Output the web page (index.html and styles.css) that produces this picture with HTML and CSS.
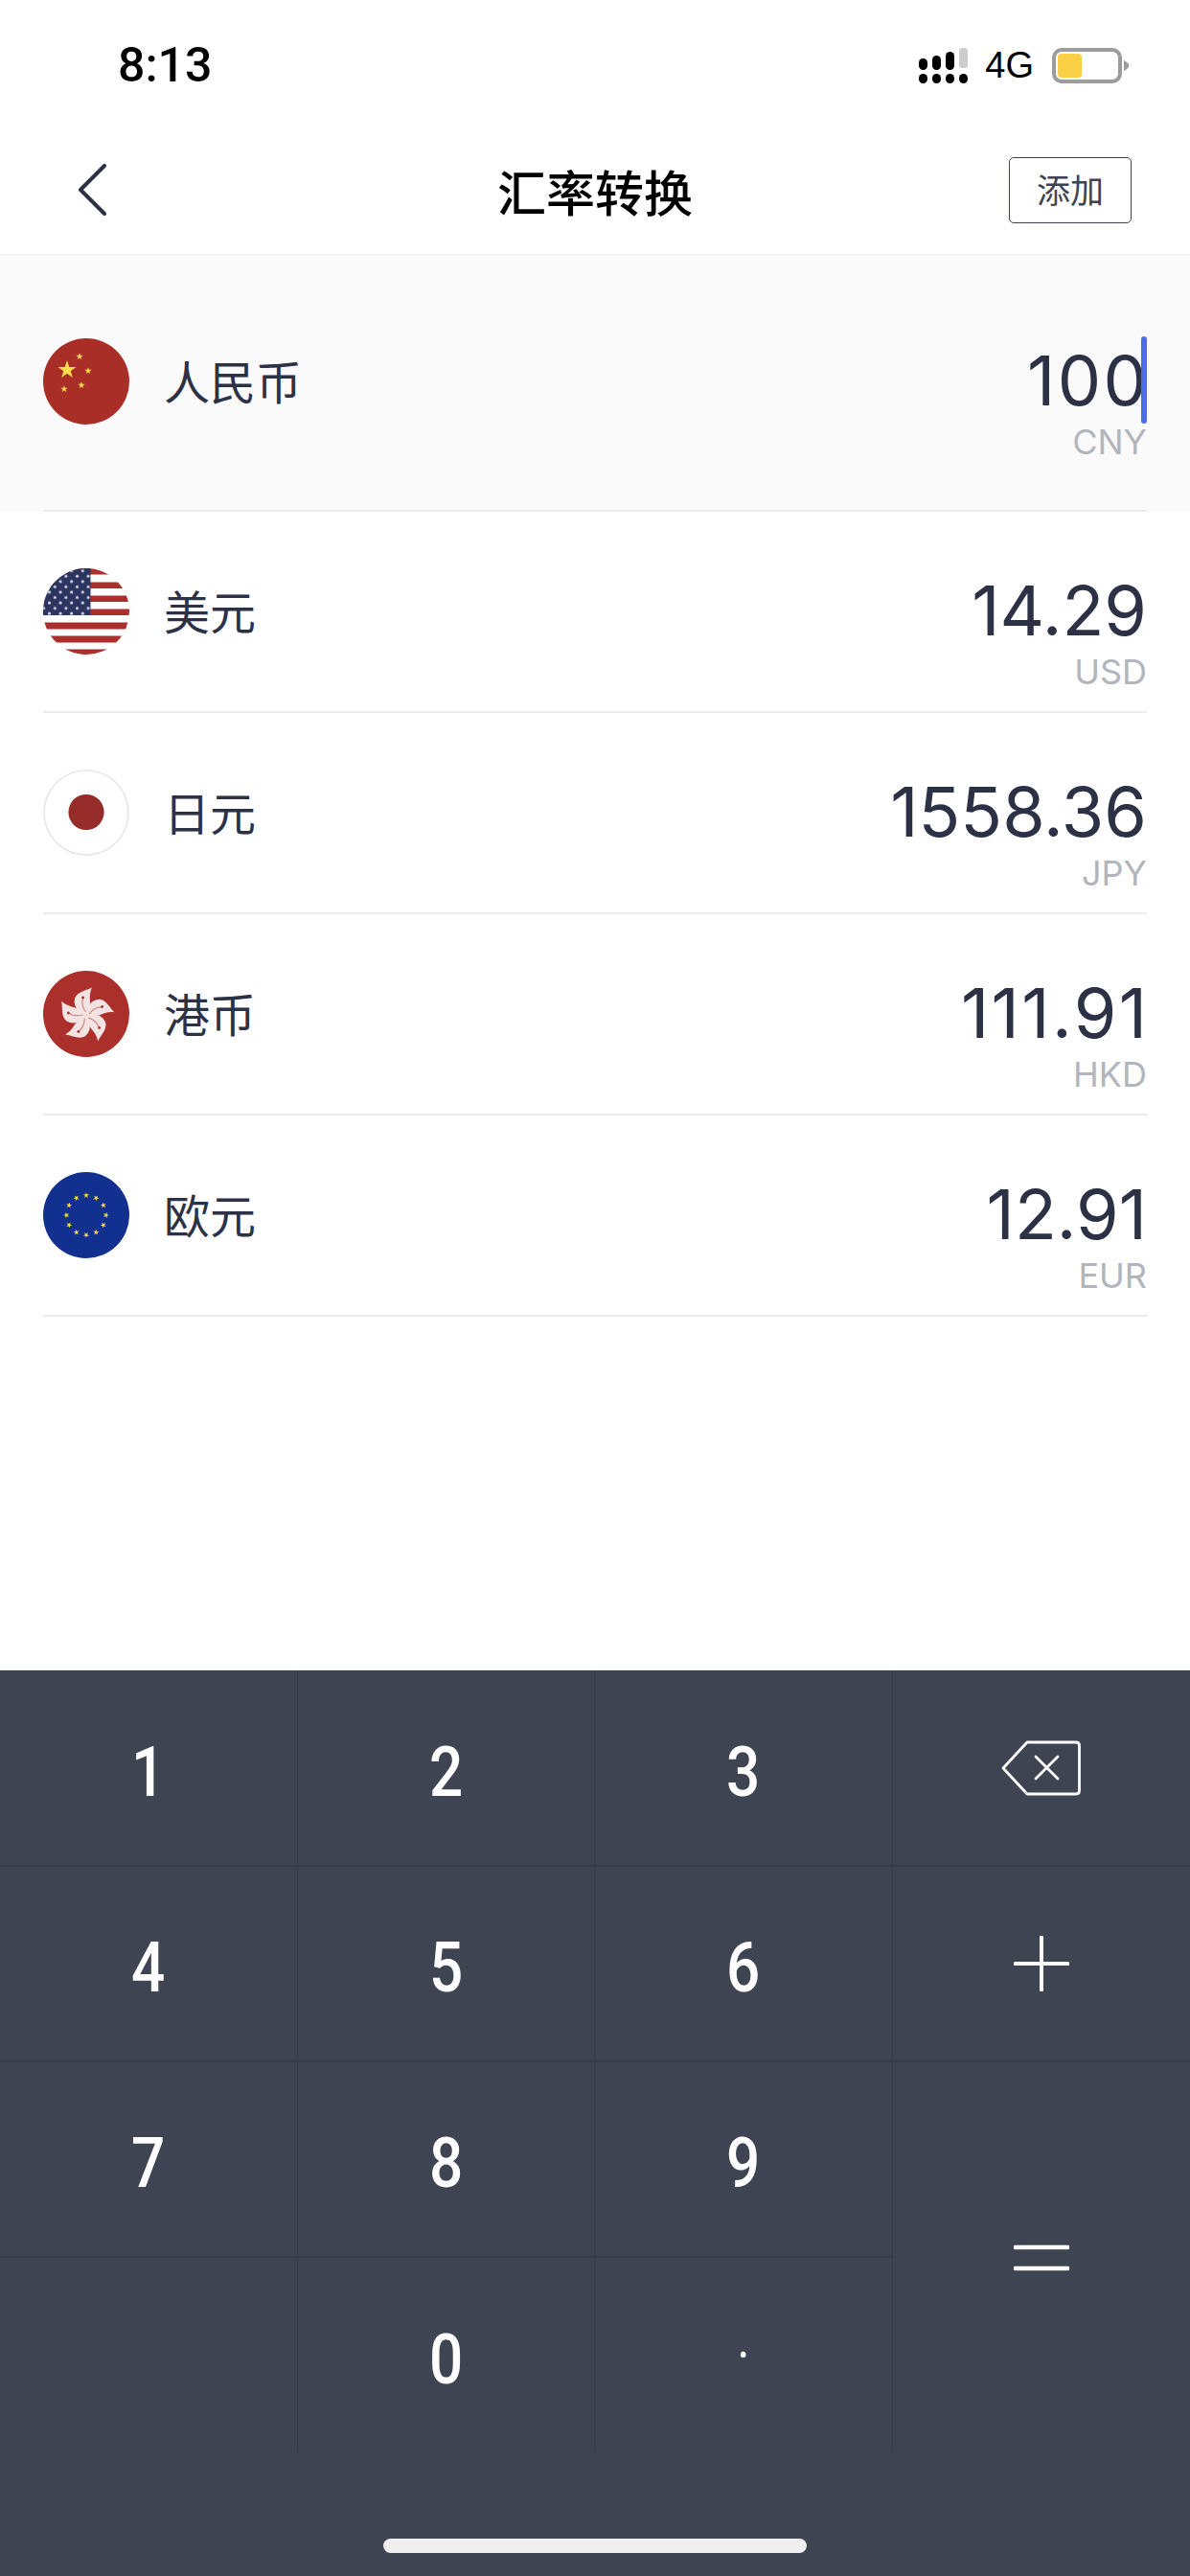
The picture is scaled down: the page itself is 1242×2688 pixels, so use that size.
FILE: index.html
```html
<!DOCTYPE html>
<html lang="zh-CN">
<head>
  <meta charset="UTF-8">
  <title>汇率转换</title>
  <link rel="stylesheet" href="styles.css">
</head>
<body>
  <div class="app">
    <!-- Status bar -->
    <div class="status">
      <span class="status-time">8:13</span>
      <div class="status-right">
        <svg class="signal" width="52" height="40" viewBox="0 0 52 40">
          <rect x="0" y="13" width="9" height="12" rx="4.5" fill="#000"/>
          <rect x="14" y="10" width="9" height="15" rx="4.5" fill="#000"/>
          <rect x="28" y="6" width="9" height="19" rx="4.5" fill="#000"/>
          <rect x="42" y="2" width="9" height="21" rx="3.5" fill="#ccc"/>
          <rect x="0" y="29" width="9" height="10" rx="4.5" fill="#000"/>
          <rect x="14" y="29" width="9" height="10" rx="4.5" fill="#000"/>
          <rect x="28" y="29" width="9" height="10" rx="4.5" fill="#000"/>
          <rect x="42" y="29" width="9" height="10" rx="4.5" fill="#000"/>
        </svg>
        <span class="status-net">4G</span>
        <div class="battery"><div class="battery-level"></div></div>
      </div>
    </div>

    <!-- Nav bar -->
    <div class="nav">
      <svg class="nav-back" width="30" height="56" viewBox="0 0 30 56">
        <path d="M28 2 L3 27 L28 52" fill="none" stroke="#2d3145" stroke-width="4" stroke-linecap="round" stroke-linejoin="round"/>
      </svg>
      <h1 class="nav-title">汇率转换</h1>
      <button class="nav-add"><span class="nav-add-label">添加</span></button>
    </div>

    <!-- Currency list -->
    <div class="list">
      <div class="row row-active">
        <div class="row-inner">
          <svg class="flag" viewBox="0 0 90 90">
            <defs>
              <polygon id="cnStar" points="0,-1 .225,-.309 .951,-.309 .363,.118 .588,.809 0,.382 -.588,.809 -.363,.118 -.951,-.309 -.225,-.309" fill="#fde14a"/>
            </defs>
            <circle cx="45" cy="45" r="45" fill="#a92e28"/>
            <use href="#cnStar" transform="translate(25 33) scale(10)"/>
            <use href="#cnStar" transform="translate(38 19) scale(3.8)"/>
            <use href="#cnStar" transform="translate(47 34) scale(3.8)"/>
            <use href="#cnStar" transform="translate(40 49) scale(3.8)"/>
            <use href="#cnStar" transform="translate(22 53) scale(3.8)"/>
          </svg>
          <span class="name">人民币</span>
          <div class="value">
            <span class="amount amount-wide amount-editing">100</span>
            <span class="code">CNY</span>
          </div>
        </div>
      </div>

      <div class="row">
        <div class="row-inner">
          <svg class="flag" viewBox="0 0 90 90">
            <defs>
              <clipPath id="usClip"><circle cx="45" cy="45" r="45"/></clipPath>
              <pattern id="usStars" x="0.1" y="2.5" width="11.6" height="11.14" patternUnits="userSpaceOnUse">
                <circle cx="6.4" cy="0.2" r="1.5" fill="#d5d7e2"/>
                <circle cx="6.4" cy="11.34" r="1.5" fill="#d5d7e2"/>
                <circle cx="0.6" cy="5.77" r="1.5" fill="#d5d7e2"/>
                <circle cx="12.2" cy="5.77" r="1.5" fill="#d5d7e2"/>
              </pattern>
            </defs>
            <g clip-path="url(#usClip)">
              <rect width="90" height="90" fill="#fff"/>
              <rect y="0" width="90" height="6.5" fill="#ab2f2c"/>
              <rect y="14.5" width="90" height="6.5" fill="#ab2f2c"/>
              <rect y="28.5" width="90" height="6.5" fill="#ab2f2c"/>
              <rect y="42.5" width="90" height="6.5" fill="#ab2f2c"/>
              <rect y="56.5" width="90" height="7" fill="#ab2f2c"/>
              <rect y="70.5" width="90" height="7" fill="#ab2f2c"/>
              <rect y="84.5" width="90" height="6" fill="#ab2f2c"/>
              <rect width="49.5" height="49" fill="#2b3560"/>
              <rect width="49.5" height="49" fill="url(#usStars)"/>
            </g>
          </svg>
          <span class="name">美元</span>
          <div class="value">
            <span class="amount">14.29</span>
            <span class="code">USD</span>
          </div>
        </div>
      </div>

      <div class="row">
        <div class="row-inner">
          <svg class="flag" viewBox="0 0 90 90">
            <circle cx="45" cy="45" r="44" fill="#fff" stroke="#e8e8e8" stroke-width="1.6"/>
            <circle cx="45" cy="44.5" r="18.6" fill="#952c2a"/>
          </svg>
          <span class="name">日元</span>
          <div class="value">
            <span class="amount">1558.36</span>
            <span class="code">JPY</span>
          </div>
        </div>
      </div>

      <div class="row">
        <div class="row-inner">
          <svg class="flag" viewBox="0 0 90 90">
            <defs>
              <g id="hkPetal">
                <path d="M45 46.5 C38 44 31 38 33 29 C35 22 44 21 51 17.5 C48 24 49 28 49 33 C49 38 47 43 45 46.5 Z" fill="#f3e3e2"/>
                <path d="M44.5 43 C41 38 40 33 42 27" fill="none" stroke="#c9706c" stroke-width="1"/>
                <circle cx="41.6" cy="28" r="1.4" fill="#a92e28"/>
              </g>
            </defs>
            <circle cx="45" cy="45" r="45" fill="#ab2f2a"/>
            <use href="#hkPetal"/>
            <use href="#hkPetal" transform="rotate(72 45 46.5)"/>
            <use href="#hkPetal" transform="rotate(144 45 46.5)"/>
            <use href="#hkPetal" transform="rotate(216 45 46.5)"/>
            <use href="#hkPetal" transform="rotate(288 45 46.5)"/>
          </svg>
          <span class="name">港币</span>
          <div class="value">
            <span class="amount amount-wide">111.91</span>
            <span class="code">HKD</span>
          </div>
        </div>
      </div>

      <div class="row">
        <div class="row-inner">
          <svg class="flag" viewBox="0 0 90 90">
            <defs>
              <polygon id="euStar" points="45,21.2 45.7,23.3 48,23.3 46.2,24.7 46.8,27 45,25.6 43.2,27 43.8,24.7 42,23.3 44.3,23.3" fill="#f7dc3a"/>
            </defs>
            <circle cx="45" cy="45" r="45" fill="#12308f"/>
            <use href="#euStar"/>
            <use href="#euStar" transform="rotate(30 45 45)"/>
            <use href="#euStar" transform="rotate(60 45 45)"/>
            <use href="#euStar" transform="rotate(90 45 45)"/>
            <use href="#euStar" transform="rotate(120 45 45)"/>
            <use href="#euStar" transform="rotate(150 45 45)"/>
            <use href="#euStar" transform="rotate(180 45 45)"/>
            <use href="#euStar" transform="rotate(210 45 45)"/>
            <use href="#euStar" transform="rotate(240 45 45)"/>
            <use href="#euStar" transform="rotate(270 45 45)"/>
            <use href="#euStar" transform="rotate(300 45 45)"/>
            <use href="#euStar" transform="rotate(330 45 45)"/>
          </svg>
          <span class="name">欧元</span>
          <div class="value">
            <span class="amount">12.91</span>
            <span class="code">EUR</span>
          </div>
        </div>
      </div>
    </div>

    <!-- Number pad -->
    <div class="keypad">
      <div class="keys">
        <button class="key"><span class="digit">1</span></button>
        <button class="key"><span class="digit">2</span></button>
        <button class="key"><span class="digit">3</span></button>
        <button class="key key-side">
          <svg width="84" height="58" viewBox="0 0 84 58">
            <path d="M27 2 H78 Q81.5 2 81.5 5.5 V52.5 Q81.5 56 78 56 H27 L2 29 Z" fill="none" stroke="#fff" stroke-width="2.8" stroke-linejoin="round"/>
            <path d="M36 17 L59 40 M59 17 L36 40" fill="none" stroke="#fff" stroke-width="2.8" stroke-linecap="round"/>
          </svg>
        </button>
        <button class="key"><span class="digit">4</span></button>
        <button class="key"><span class="digit">5</span></button>
        <button class="key"><span class="digit">6</span></button>
        <button class="key key-side">
          <svg width="58" height="58" viewBox="0 0 58 58">
            <path d="M1.5 29 H56.5 M29 1.5 V56.5" fill="none" stroke="#fff" stroke-width="4" stroke-linecap="round"/>
          </svg>
        </button>
        <button class="key"><span class="digit">7</span></button>
        <button class="key"><span class="digit">8</span></button>
        <button class="key"><span class="digit">9</span></button>
        <button class="key key-side key-equals">
          <svg width="58" height="28" viewBox="0 0 58 28">
            <path d="M1.5 3 H56.5 M1.5 25 H56.5" fill="none" stroke="#fff" stroke-width="4.5" stroke-linecap="round"/>
          </svg>
        </button>
        <div class="key key-blank"></div>
        <button class="key"><span class="digit">0</span></button>
        <button class="key"><span class="digit digit-dot">·</span></button>
      </div>
      <div class="home-bar"></div>
    </div>
  </div>
</body>
</html>
```

FILE: styles.css
```css
* {
  box-sizing: border-box;
}
body {
  margin: 0;
  background: #fff;
  font-family: "Noto Sans CJK SC", "Noto Sans", sans-serif;
}
.app {
  width: 1242px;
  height: 2688px;
  display: flex;
  flex-direction: column;
  overflow: hidden;
}

/* Status bar */
.status {
  height: 132px;
  padding: 40px 71px 0 123px;
  display: flex;
  justify-content: space-between;
  align-items: flex-start;
}
.status-time {
  font-family: Roboto, sans-serif;
  font-weight: 500;
  font-size: 50px;
  line-height: 56px;
  color: #000;
}
.status-right {
  height: 56px;
  display: flex;
  align-items: center;
}
.status-net {
  margin-left: 17px;
  font-family: "Liberation Sans", sans-serif;
  font-size: 38px;
  color: #000;
}
.battery {
  position: relative;
  margin-left: 19px;
  width: 73px;
  height: 37px;
  padding: 2px;
  border: 4px solid #9c9c9c;
  border-radius: 10px;
}
.battery::after {
  content: "";
  position: absolute;
  left: 71px;
  top: 9px;
  width: 5px;
  height: 12px;
  background: #9c9c9c;
  clip-path: polygon(0 0, 100% 35%, 100% 65%, 0 100%);
}
.battery-level {
  width: 25px;
  height: 100%;
  background: #f9cf45;
  border-radius: 4px;
}

/* Nav bar */
.nav {
  height: 135px;
  padding: 0 61px 0 81px;
  display: flex;
  justify-content: space-between;
  align-items: center;
  position: relative;
  border-bottom: 2px solid #f2f2f2;
}
.nav-title {
  position: absolute;
  left: 0;
  right: 0;
  margin: 0;
  text-align: center;
  font-size: 51px;
  font-weight: 500;
  color: #000;
}
.nav-add {
  width: 128px;
  height: 69px;
  padding: 0 0 4px;
  background: #fff;
  border: 1.5px solid #3e4252;
  border-radius: 5px;
  font-family: inherit;
  font-size: 35px;
  color: #3e4252;
}

/* Currency rows */
.list {
  flex: 1;
}
.row {
  padding: 0 45px;
}
.row-active {
  background: #fafafa;
}
.row-inner {
  height: 210px;
  display: flex;
  align-items: center;
  border-bottom: 2px solid #ebebeb;
}
.row-active .row-inner {
  height: 267px;
  padding: 26px 0 29px;
}
.flag {
  width: 90px;
  height: 90px;
  flex: none;
  filter: blur(0.5px);
}
.name {
  margin: 0 0 4px 36px;
  font-size: 48px;
  color: #2d3145;
}
.value {
  align-self: flex-start;
  margin-left: auto;
  padding-top: 63px;
  display: flex;
  flex-direction: column;
  align-items: flex-end;
  font-family: Inter, sans-serif;
}
.row-active .value {
  padding-top: 64px;
}
.amount {
  position: relative;
  font-size: 72px;
  line-height: 80px;
  color: #2d3145;
}
.amount-wide {
  letter-spacing: 2.4px;
  margin-right: -2.4px;
}
.amount-editing::after {
  content: "";
  position: absolute;
  right: 2.4px;
  top: -6px;
  width: 6px;
  height: 91px;
  border-radius: 3px;
  background: #4e6ce8;
}
.code {
  margin-top: 4px;
  font-size: 36px;
  line-height: 40px;
  color: #b3b5bc;
}

/* Number pad */
.keypad {
  height: 945px;
  background: #3f4452;
}
.keys {
  display: grid;
  grid-template-columns: repeat(4, 1fr);
  grid-template-rows: 205px 204px 204px 203px;
}
.key {
  display: flex;
  align-items: center;
  justify-content: center;
  padding: 0;
  background: none;
  border: none;
  border-right: 1px solid #383b4a;
  border-bottom: 2px solid #383b4a;
  color: #fff;
}
.key:nth-last-child(-n+3) {
  border-bottom: none;
}
.key-side {
  border-right: none;
}
.key-equals {
  grid-row: 3 / span 2;
  grid-column: 4;
  border-bottom: none;
}
.digit {
  display: inline-block;
  padding-top: 9px;
  font-family: Roboto, sans-serif;
  font-weight: 500;
  font-size: 73px;
  line-height: 1;
  transform: scaleX(0.85);
}
.digit-dot {
  padding-top: 0;
  font-size: 48px;
}
.home-bar {
  width: 442px;
  height: 15px;
  margin: 90px auto 0;
  border-radius: 8px;
  background: #efefef;
}
```
